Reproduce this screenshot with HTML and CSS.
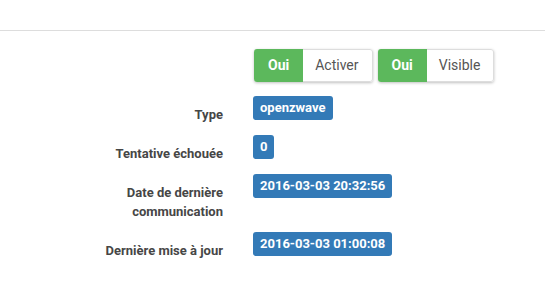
FILE: index.html
```html
<!DOCTYPE html>
<html lang="fr">
<head>
    <meta charset="UTF-8">
    <meta name="viewport" content="width=device-width, initial-scale=1.0">
    <title>Équipement</title>
    <link rel="stylesheet" href="styles.css">
</head>
<body>
    <hr class="separator">

    <form class="form-horizontal">
        <div class="form-group toggles-row">
            <span class="control-label"></span>
            <div class="controls">
                <div class="toggle">
                    <span class="toggle-on">Oui</span>
                    <span class="toggle-label">Activer</span>
                </div>
                <div class="toggle">
                    <span class="toggle-on">Oui</span>
                    <span class="toggle-label">Visible</span>
                </div>
            </div>
        </div>

        <div class="form-group">
            <label class="control-label">Type</label>
            <div class="controls"><span class="badge">openzwave</span></div>
        </div>

        <div class="form-group">
            <label class="control-label">Tentative échouée</label>
            <div class="controls"><span class="badge">0</span></div>
        </div>

        <div class="form-group">
            <label class="control-label">Date de dernière<br>communication</label>
            <div class="controls"><span class="badge">2016-03-03 20:32:56</span></div>
        </div>

        <div class="form-group">
            <label class="control-label">Dernière mise à jour</label>
            <div class="controls"><span class="badge">2016-03-03 01:00:08</span></div>
        </div>
    </form>
</body>
</html>
```

FILE: styles.css
```css
* {
    box-sizing: border-box;
    margin: 0;
    padding: 0;
}

body {
    font-family: Roboto, 'Liberation Sans', sans-serif;
    background-color: #fff;
    color: #333;
}

.separator {
    margin-top: 30px;
    border: none;
    border-top: 1px solid #ddd;
}

.form-horizontal {
    padding-top: 18px;
}

.form-group {
    display: grid;
    grid-template-columns: 223px 1fr;
    column-gap: 30px;
    margin-bottom: 11px;
}

.toggles-row {
    margin-bottom: 14px;
}

.control-label {
    text-align: right;
    font-size: 13px;
    font-weight: 700;
    line-height: 19px;
    padding-top: 9px;
    color: #464646;
}

.toggles-row .control-label {
    padding-top: 0;
}

.controls {
    display: flex;
    align-items: flex-start;
    gap: 5px;
}

.toggle {
    display: inline-flex;
    height: 33px;
    font-size: 14px;
    border-radius: 3px;
    overflow: hidden;
    background-color: #fff;
    box-shadow: 0 1px 3px rgba(0, 0, 0, 0.25);
}

.toggles-row .toggle:first-child {
    margin-left: 1px;
}

.toggle-on {
    background-color: #5cb85c;
    color: #fff;
    font-weight: 700;
    line-height: 33px;
    padding: 0 14px;
}

.toggle-label {
    color: #555;
    line-height: 31px;
    padding: 0 13px 0 12px;
    border: 1px solid #ddd;
    border-left: none;
    border-radius: 0 3px 3px 0;
}

.badge {
    display: inline-block;
    height: 24px;
    line-height: 24px;
    padding: 0 7px;
    font-size: 13px;
    font-weight: 700;
    color: #fff;
    background-color: #337ab7;
    border-radius: 3px;
}
```
